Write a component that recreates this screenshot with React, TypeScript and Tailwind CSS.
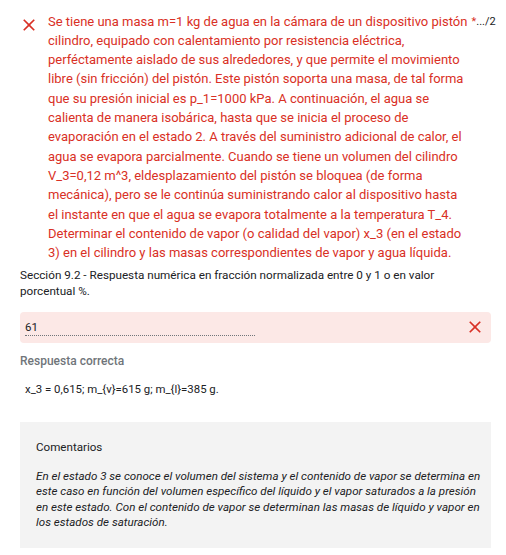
import React from "react";

const XIcon = ({ className }: { className?: string }) => (
  <svg viewBox="0 0 24 24" className={className} fill="currentColor">
    <path d="M19 6.41 17.59 5 12 10.59 6.41 5 5 6.41 10.59 12 5 17.59 6.41 19 12 13.41 17.59 19 19 17.59 13.41 12z" />
  </svg>
);

export default function App() {
  return (
    <div
      className="w-[506px] h-[555px] bg-white overflow-hidden text-[#202124]"
      style={{ fontFamily: "Roboto, 'Liberation Sans', sans-serif" }}
    >
      <div className="pt-[11.5px] pl-[20px] pr-[16px]">
        <div className="flex items-start">
          <XIcon className="w-[20px] h-[20px] text-[#d93025] mt-[3px] -ml-[1.5px] shrink-0" />
          <div className="ml-[9.5px] text-[13px] leading-[19.33px] text-[#d93025] flex-1">
            Se tiene una masa m=1 kg de agua en la cámara de un dispositivo pistón cilindro, equipado con calentamiento por resistencia eléctrica, perféctamente aislado de sus alrededores, y que permite el movimiento libre (sin fricción) del pistón. Este pistón soporta una masa, de tal forma que su presión inicial es p_1=1000 kPa. A continuación, el agua se calienta de manera isobárica, hasta que se inicia el proceso de evaporación en el estado 2. A través del suministro adicional de calor, el agua se evapora parcialmente. Cuando se tiene un volumen del cilindro V_3=0,12 m^3, eldesplazamiento del pistón se bloquea (de forma mecánica), pero se le continúa suministrando calor al dispositivo hasta el instante en que el agua se evapora totalmente a la temperatura T_4. Determinar el contenido de vapor (o calidad del vapor) x_3 (en el estado 3) en el cilindro y las masas correspondientes de vapor y agua líquida.
          </div>
          <div className="w-[21.5px] shrink-0 pl-[3px] text-[11px] leading-[19.33px] whitespace-nowrap">
            <span className="text-[#d93025]">*</span>
            <span>.../2</span>
          </div>
        </div>
        <div className="text-[11.7px] leading-[16px] mt-[4px] pr-[30px]">
          Sección 9.2 - Respuesta numérica en fracción normalizada entre 0 y 1 o en valor porcentual %.
        </div>
      </div>

      <div className="pl-[20px] pr-[15px]">
        <div className="mt-[13px] h-[31px] rounded-[4px] bg-[#fce8e6] flex items-center pl-[5px] pr-[6px]">
          <div className="w-[230px] border-b border-dotted border-[#70757a] text-[11.5px] leading-[16px] pt-[1px] pb-[0px]">
            61
          </div>
          <div className="flex-1" />
          <XIcon className="w-[20px] h-[20px] text-[#d93025]" />
        </div>

        <div className="mt-[10px] text-[12px] font-medium leading-[16px] text-[#70757a]">
          Respuesta correcta
        </div>
        <div className="mt-[12px] pl-[5px] text-[11.4px] leading-[16px]">
          x_3 = 0,615; m_{"{v}"}=615 g; m_{"{l}"}=385 g.
        </div>

        <div className="mt-[25px] h-[126px] bg-[#f3f3f3] pl-[16px] pr-[6px] pt-[17px]">
          <div className="text-[11.6px] leading-[16px]">Comentarios</div>
          <div className="mt-[14px] text-[11.6px] leading-[15.5px] italic">
            En el estado 3 se conoce el volumen del sistema y el contenido de vapor se determina en este caso en función del volumen específico del líquido y el vapor saturados a la presión en este estado. Con el contenido de vapor se determinan las masas de líquido y vapor en los estados de saturación.
          </div>
        </div>
      </div>
    </div>
  );
}
